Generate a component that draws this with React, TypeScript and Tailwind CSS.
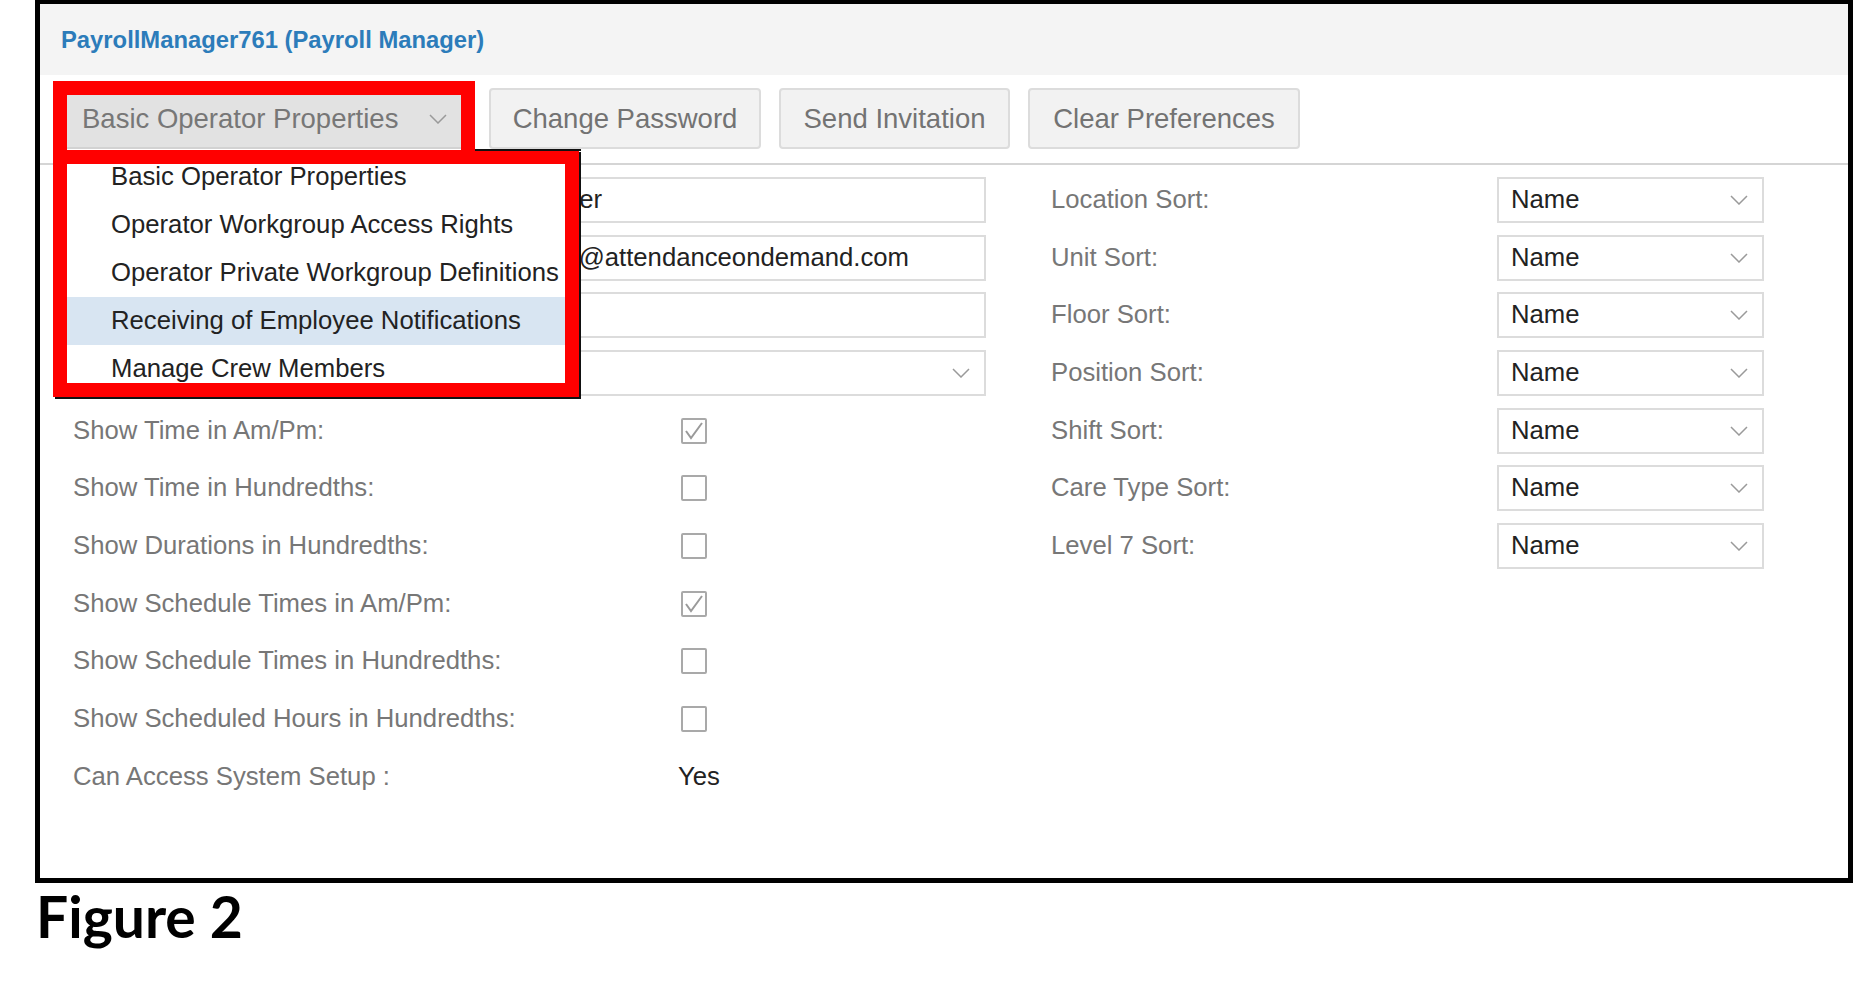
import React from 'react';

const MENU_ITEMS = [
  'Basic Operator Properties',
  'Operator Workgroup Access Rights',
  'Operator Private Workgroup Definitions',
  'Receiving of Employee Notifications',
  'Manage Crew Members',
];

const SORTS = ['Location Sort:', 'Unit Sort:', 'Floor Sort:', 'Position Sort:', 'Shift Sort:', 'Care Type Sort:', 'Level 7 Sort:'];

const CHECKS: { label: string; checked: boolean }[] = [
  { label: 'Show Time in Am/Pm:', checked: true },
  { label: 'Show Time in Hundredths:', checked: false },
  { label: 'Show Durations in Hundredths:', checked: false },
  { label: 'Show Schedule Times in Am/Pm:', checked: true },
  { label: 'Show Schedule Times in Hundredths:', checked: false },
  { label: 'Show Scheduled Hours in Hundredths:', checked: false },
];

// rows hidden under the open menu: value text starts at a row-specific offset
const INPUTS = [
  { value: 'Payroll Manager', pad: 'pl-[7px]' },
  { value: 'payroll@attendanceondemand.com', pad: 'pl-[95px]' },
  { value: '', pad: 'pl-[7px]' },
];

const Chevron = ({ className = '' }: { className?: string }) => (
  <svg width="18" height="10" viewBox="0 0 18 10" className={className}>
    <polyline points="1,1 9,9 17,1" fill="none" stroke="#9a9a9a" strokeWidth="1.5" />
  </svg>
);

const Checkbox = ({ checked }: { checked: boolean }) => (
  <div className="w-[26px] h-[26px] border-2 border-[#a9a9a9] rounded-[2px] bg-white flex items-center justify-center">
    {checked && (
      <svg width="22" height="22" viewBox="0 0 22 22">
        <polyline points="3,11 8,18 19,3" fill="none" stroke="#9a9a9a" strokeWidth="2" />
      </svg>
    )}
  </div>
);

const ToolButton = ({ label, width }: { label: string; width: string }) => (
  <button className={`${width} h-[61px] flex items-center justify-center bg-[#f2f2f2] border-2 border-[#dcdcdc] rounded-[4px] text-[27.5px] text-[#737373] leading-none`}>
    {label}
  </button>
);

export default function App() {
  return (
    <div className="w-[1853px] h-[1007px] bg-white overflow-hidden font-['Liberation_Sans',Arial,sans-serif]">
      <div className="ml-[35px] w-[1818px] h-[883px] border-x-[5px] border-t-4 border-b-[5px] border-black">
        <div className="relative h-full">
          {/* header */}
          <div className="h-[71px] bg-[#f4f4f4] flex items-center pl-[21px]">
            <span className="text-[23.8px] font-bold text-[#2c7cba] leading-none">PayrollManager761 (Payroll Manager)</span>
          </div>

          {/* toolbar */}
          <div className="flex items-start gap-[18px] pl-[21px] pt-[13px] pb-[14px]">
            <button className="w-[410px] h-[61px] flex items-center justify-between pl-[19px] pr-[22px] bg-[#e2e2e2] border-2 border-[#d2d2d2] rounded-[4px] text-[27.5px] text-[#777] leading-none">
              <span>Basic Operator Properties</span>
              <Chevron />
            </button>
            <ToolButton label="Change Password" width="w-[272px]" />
            <ToolButton label="Send Invitation" width="w-[231px]" />
            <ToolButton label="Clear Preferences" width="w-[272px]" />
          </div>
          <div className="h-[2px] bg-[#d5d5d5]" />

          {/* form */}
          <div className="flex pt-[6px] text-[25.7px] leading-none">
            <div className="pl-[33px] w-[946px]">
              {INPUTS.map((r, i) => (
                <div key={i} className="h-[57.7px] flex items-center">
                  <div className="w-[333px]" />
                  <div className={`w-[580px] h-[46px] border-2 border-[#dcdcdc] bg-white flex items-center ${r.pad} text-[#222] whitespace-nowrap overflow-hidden`}>
                    {r.value}
                  </div>
                </div>
              ))}
              <div className="h-[57.7px] flex items-center">
                <div className="w-[333px]" />
                <div className="w-[580px] h-[46px] border-2 border-[#dcdcdc] bg-white flex items-center justify-end pr-[14px]">
                  <Chevron />
                </div>
              </div>
              {CHECKS.map((c) => (
                <div key={c.label} className="h-[57.7px] flex items-center">
                  <div className="w-[608px] text-[#777]">{c.label}</div>
                  <Checkbox checked={c.checked} />
                </div>
              ))}
              <div className="h-[57.7px] flex items-center">
                <div className="w-[605px] text-[#777]">Can Access System Setup :</div>
                <div className="text-[#222]">Yes</div>
              </div>
            </div>

            <div className="ml-[65px]">
              {SORTS.map((s) => (
                <div key={s} className="h-[57.7px] flex items-center">
                  <div className="w-[446px] text-[#777]">{s}</div>
                  <div className="w-[267px] h-[46px] border-2 border-[#dcdcdc] bg-white flex items-center justify-between pl-[12px] pr-[14px] text-[#222]">
                    <span>Name</span>
                    <Chevron />
                  </div>
                </div>
              ))}
            </div>
          </div>

          {/* open dropdown menu */}
          <div className="absolute left-[21px] top-[149px] w-[510px] bg-white text-[25.7px] leading-none text-[#222]">
            {MENU_ITEMS.map((m, i) => (
              <div key={m} className={`h-[48px] flex items-center pl-[50px] whitespace-nowrap ${i === 3 ? 'bg-[#d8e5f2]' : ''}`}>
                {m}
              </div>
            ))}
          </div>

          {/* red annotation frames */}
          <div className="absolute left-[13px] top-[146px] w-[526px] h-[247px] border-[14px] border-[#ff0000] shadow-[2px_2px_0_#111]" />
          <div className="absolute left-[435px] top-[145px] w-[106px] h-[2px] bg-[#111]" />
          <div className="absolute left-[13px] top-[77px] w-[422px] h-[83px] border-[14px] border-[#ff0000]" />
        </div>
      </div>
      <div className="mt-[5px] pl-[36px] font-['Lato',sans-serif] font-bold text-[57px] leading-none text-black">Figure 2</div>
    </div>
  );
}
